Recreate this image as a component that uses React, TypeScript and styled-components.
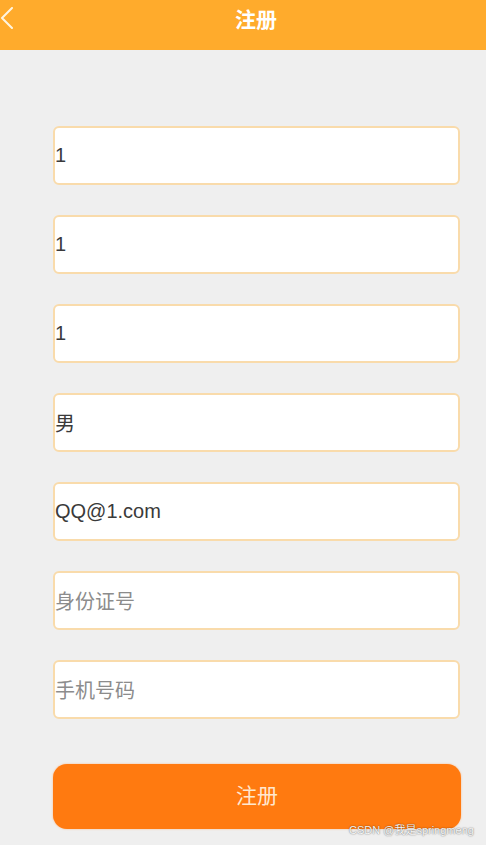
import React from "react";
import styled, { createGlobalStyle } from "styled-components";

const Global = createGlobalStyle`
  html, body { margin: 0; padding: 0; background: #efefef; }
  body { font-family: "Liberation Sans", "Noto Sans CJK SC", Arial, sans-serif; }
  * { box-sizing: border-box; }
`;

const Page = styled.div`
  position: relative;
  width: 486px;
  height: 845px;
  background: #efefef;
  overflow: hidden;
`;

const Header = styled.header`
  height: 50px;
  background: #ffab2c;
  display: flex;
  align-items: flex-start;
`;

const Back = styled.div`
  width: 26px;
  height: 50px;
  display: flex;
  align-items: flex-start;
  padding-top: 7px;
`;

const Title = styled.h1`
  flex: 1;
  margin: 0;
  padding-top: 4px;
  text-align: center;
  color: #fff;
  font-size: 21px;
  line-height: 28px;
  font-weight: bold;
  font-family: "Noto Sans CJK SC", sans-serif;
`;

const Form = styled.div`
  display: flex;
  flex-direction: column;
  gap: 30px;
  padding: 76px 26px 0 53px;
`;

const Field = styled.div<{ $placeholder?: boolean }>`
  height: 59px;
  background: #fff;
  border: 2px solid #f9dbab;
  border-radius: 6px;
  display: flex;
  align-items: center;
  padding-left: 0;
  font-size: 20px;
  color: ${(p) => (p.$placeholder ? "#8c8c8c" : "#3a3a3a")};
  font-family: "Liberation Sans", "Noto Sans CJK SC", sans-serif;
`;

const Submit = styled.div`
  margin: 45px 25px 0 53px;
  height: 65px;
  border-radius: 14px;
  background: #ff7a10;
  box-shadow: 0 0 2px #ffb27a;
  display: flex;
  align-items: center;
  justify-content: center;
  padding-bottom: 6px;
  color: #ffe8cf;
  font-size: 21px;
  font-family: "Noto Sans CJK SC", sans-serif;
`;

const Watermark = styled.div`
  position: absolute;
  left: 349px;
  top: 821px;
  font-size: 11px;
  color: #f6f6f6;
  text-shadow: 0 0 1.5px rgba(0, 0, 0, 0.7);
  font-family: "Liberation Sans", "Noto Sans CJK SC", sans-serif;
`;

const fields: { v: string; p?: boolean }[] = [
  { v: "1" },
  { v: "1" },
  { v: "1" },
  { v: "男" },
  { v: "QQ@1.com" },
  { v: "身份证号", p: true },
  { v: "手机号码", p: true },
];

export default function App() {
  return (
    <>
      <Global />
      <Page>
        <Header>
          <Back>
            <svg width="14" height="22" viewBox="0 0 14 22">
              <polyline
                points="12,1 2,11 12,21"
                fill="none"
                stroke="#fff5e0"
                strokeWidth="2"
                strokeLinecap="round"
                strokeLinejoin="round"
              />
            </svg>
          </Back>
          <Title>注册</Title>
        </Header>
        <Form>
          {fields.map((f, i) => (
            <Field key={i} $placeholder={f.p}>
              {f.v}
            </Field>
          ))}
        </Form>
        <Submit>注册</Submit>
        <Watermark>CSDN @我是springmeng</Watermark>
      </Page>
    </>
  );
}
